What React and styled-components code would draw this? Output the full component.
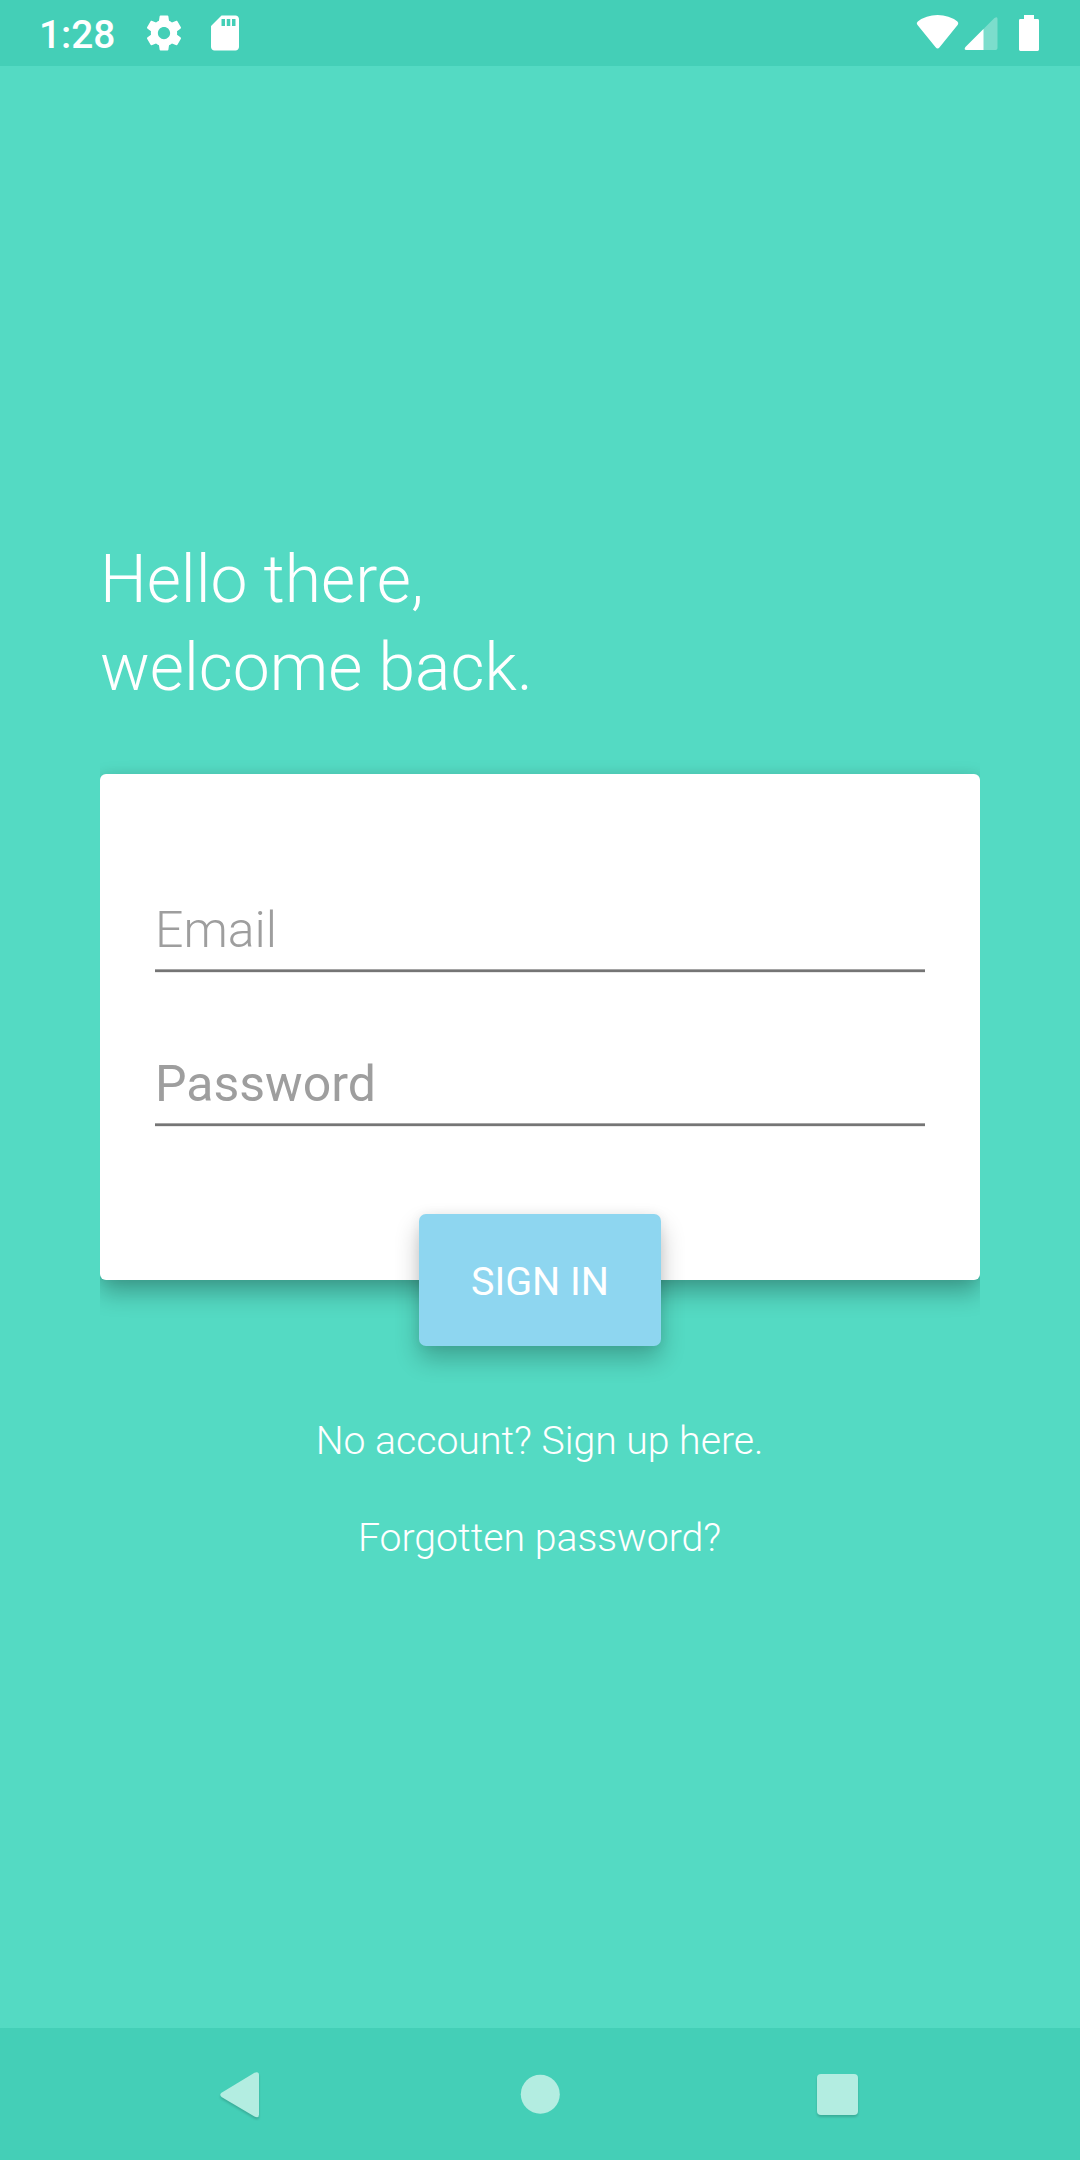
import React from "react";
import styled, { createGlobalStyle } from "styled-components";

const GlobalStyle = createGlobalStyle`
  * { box-sizing: border-box; }
  body {
    margin: 0;
    background: #54dac3;
    font-family: Roboto, "Noto Sans", sans-serif;
    color: #fff;
  }
`;

const Screen = styled.div`
  width: 1080px;
  height: 2160px;
  display: flex;
  flex-direction: column;
  background: #54dac3;
  overflow: hidden;
`;

const StatusBar = styled.header`
  height: 66px;
  flex: none;
  display: flex;
  align-items: flex-start;
  padding: 12px 41px 0 39px;
  background: #44cfb7;
`;

const Clock = styled.span`
  width: 104px;
  font-size: 38.8px;
  font-weight: 500;
  line-height: 46px;
`;

const StatusIcon = styled.svg`
  display: block;
  flex: none;
  width: ${(p) => p.$w}px;
  height: 42px;
  margin-left: ${(p) => p.$gap || 0}px;
  fill: #fff;
`;

const Spacer = styled.div`
  flex: 1;
`;

const Content = styled.main`
  flex: 1;
  display: flex;
  flex-direction: column;
  align-items: center;
  padding: 470px 100px 0;
`;

const Greeting = styled.h1`
  width: 100%;
  height: 238px;
  margin: 0;
  font-size: 66px;
  font-weight: 300;
  line-height: 88px;
`;

const Card = styled.section`
  width: 100%;
  height: 506px;
  flex: none;
  padding: 126px 55px 0;
  display: flex;
  flex-direction: column;
  gap: 81px;
  border-radius: 6px;
  background: #fff;
  box-shadow: 0 12px 24px rgba(0, 0, 0, 0.29), 0 0 12px rgba(0, 0, 0, 0.06);
  clip-path: inset(-60px 0);
`;

const Field = styled.label`
  height: 73px;
  display: flex;
  flex-direction: column;
  justify-content: space-between;
  color: #9e9e9e;
  font-size: 50px;
  font-weight: ${(p) => p.$weight};
  line-height: 60px;
`;

const Underline = styled.i`
  height: 4px;
  background: linear-gradient(#a5a5a5 1px, #757575 1px, #757575 3px, #e9e9e9 3px);
`;

const SignInButton = styled.button`
  width: 242px;
  height: 132px;
  flex: none;
  margin: -66px 0 0;
  padding: 3px 0 0;
  border: 0;
  border-radius: 7px;
  background: #8ed6f0;
  box-shadow: 0 13px 24px rgba(0, 0, 0, 0.24), 0 0 12px rgba(0, 0, 0, 0.06);
  color: #fff;
  font: 400 39.5px/46px Roboto, "Noto Sans", sans-serif;
  z-index: 1;
`;

const Links = styled.nav`
  display: flex;
  flex-direction: column;
  align-items: center;
  gap: 51px;
  padding: 72px 1px 0 0;
`;

const TextLink = styled.a`
  font-size: 39.2px;
  font-weight: 300;
  line-height: 46px;
`;

const NavBar = styled.footer`
  height: 132px;
  flex: none;
  display: flex;
  justify-content: space-between;
  padding: 36px 212px 0 210px;
  background: #44cfb7;
`;

const NavIcon = styled.svg`
  display: block;
  width: 60px;
  height: 60px;
  fill: #b3ede1;
  overflow: visible;
  filter: ${(p) => (p.$flat ? "none" : "drop-shadow(0 2px 1px rgba(0, 0, 0, 0.16))")};
`;

export default function App() {
  return (
    <Screen>
      <GlobalStyle />
      <StatusBar>
        <Clock>1:28</Clock>
        <StatusIcon $w={42} viewBox="0 0 24 24">
          <path d="M19.43 12.98c.04-.32.07-.64.07-.98s-.03-.66-.07-.98l2.11-1.65c.19-.15.24-.42.12-.64l-2-3.46c-.12-.22-.39-.3-.61-.22l-2.49 1c-.52-.4-1.08-.73-1.69-.98l-.38-2.65C14.46 2.18 14.25 2 14 2h-4c-.25 0-.46.18-.49.42l-.38 2.65c-.61.25-1.17.59-1.69.98l-2.49-1c-.23-.09-.49 0-.61.22l-2 3.46c-.13.22-.07.49.12.64l2.11 1.65c-.04.32-.07.65-.07.98s.03.66.07.98l-2.11 1.65c-.19.15-.24.42-.12.64l2 3.46c.12.22.39.3.61.22l2.49-1c.52.4 1.08.73 1.69.98l.38 2.65c.03.24.24.42.49.42h4c.25 0 .46-.18.49-.42l.38-2.65c.61-.25 1.17-.59 1.69-.98l2.49 1c.23.09.49 0 .61-.22l2-3.46c.12-.22.07-.49-.12-.64l-2.11-1.65zM12 15.5c-1.93 0-3.5-1.57-3.5-3.5s1.57-3.5 3.5-3.5 3.5 1.57 3.5 3.5-1.57 3.5-3.5 3.5z" />
        </StatusIcon>
        <StatusIcon $w={42} $gap={19} viewBox="0 0 24 24">
          <path d="M18 2h-8L4.02 8 4 20c0 1.1.9 2 2 2h12c1.1 0 2-.9 2-2V4c0-1.1-.9-2-2-2zm-6 6h-2V4h2v4zm3 0h-2V4h2v4zm3 0h-2V4h2v4z" />
        </StatusIcon>
        <Spacer />
        <StatusIcon $w={44} viewBox="0 0 44 42">
          <path d="M2.3 12.7Q.9 10.8 2.8 9.5Q11 3 22.6 3T42.4 9.5Q44 10.8 42.8 12.7L24.6 35.3Q22.6 37.8 20.6 35.3Z" />
        </StatusIcon>
        <StatusIcon $w={36} $gap={4} viewBox="0 0 36 42">
          <path opacity=".3" d="M34.5 7v29q0 2-2 2H3.500q-3 0-1-3L31.500 6q3-2 3 1z" />
          <path d="M20.500 17v21H3.500q-3 0-1-3z" />
        </StatusIcon>
        <StatusIcon $w={22} $gap={18} viewBox="0 0 22 42">
          <path d="M7 3h10v4h3.6q1.4 0 1.4 1.4v29.2q0 1.4-1.4 1.4H3.4Q2 39 2 37.6V8.4Q2 7 3.4 7H7z" />
        </StatusIcon>
      </StatusBar>

      <Content>
        <Greeting>
          Hello there,
          <br />
          welcome back.
        </Greeting>
        <Card>
          <Field $weight={300}>
            Email
            <Underline />
          </Field>
          <Field $weight={400}>
            Password
            <Underline />
          </Field>
        </Card>
        <SignInButton>SIGN IN</SignInButton>
        <Links>
          <TextLink>No account? Sign up here.</TextLink>
          <TextLink>Forgotten password?</TextLink>
        </Links>
      </Content>

      <NavBar>
        <NavIcon viewBox="0 0 60 60">
          <path d="M11.5 28.7Q9 30.8 11.5 32.9L44.5 52.6Q49 54.5 49 50.5V11Q49 7 44.5 8.700Z" />
        </NavIcon>
        <NavIcon $flat viewBox="0 0 60 60">
          <circle cx="31.3" cy="30.3" r="19.5" />
        </NavIcon>
        <NavIcon viewBox="0 0 60 60">
          <rect x="9" y="10" width="41" height="41" rx="4" />
        </NavIcon>
      </NavBar>
    </Screen>
  );
}
